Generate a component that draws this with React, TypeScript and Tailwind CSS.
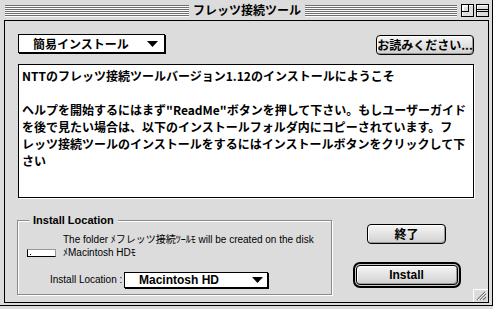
import React from 'react';

const jp = "font-['Noto_Sans_CJK_JP','Noto_Sans_CJK_SC',sans-serif]";
const sans = "font-['Liberation_Sans','Noto_Sans_CJK_JP',sans-serif]";

function Stripes({ className }: { className: string }) {
  return (
    <div className={`flex flex-col gap-px ${className}`}>
      {[0, 1, 2, 3, 4, 5].map((i) => (
        <div key={i} className="h-px bg-[#6f6f6f] shadow-[0_1px_0_#fafafa]" />
      ))}
    </div>
  );
}

const Arrow = () => (
  <svg width="11" height="6" viewBox="0 0 11 6">
    <polygon points="0,0 11,0 5.5,6" fill="#000" />
  </svg>
);

const ZoomBox = () => (
  <svg width="13" height="13" viewBox="0 0 13 13">
    <rect x="0.5" y="0.5" width="12" height="12" fill="#dcdcdc" stroke="#000" />
    <path d="M1.5 11.5V1.5H11.5" stroke="#fff" fill="none" />
    <rect x="0.5" y="0.5" width="7" height="7" fill="none" stroke="#000" />
    <path d="M2.5 6.5V2.5H6.5" stroke="#fff" fill="none" />
  </svg>
);

const CollapseBox = () => (
  <svg width="13" height="13" viewBox="0 0 13 13">
    <rect x="0.5" y="0.5" width="12" height="12" fill="#dcdcdc" stroke="#000" />
    <path d="M1.5 11.5V1.5H11.5" stroke="#fff" fill="none" />
    <path d="M0.5 5.5H12.5M0.5 7.5H12.5" stroke="#000" />
  </svg>
);

const GrowBox = () => (
  <svg width="15" height="13" viewBox="0 0 15 13">
    <rect x="0" y="0" width="15" height="13" fill="#dcdcdc" />
    <path d="M0.5 13V0.5H15" stroke="#fff" fill="none" />
    <path d="M4 11L12 3M7 11L13 5M10 11L13 8" stroke="#777" strokeWidth="1.2" />
    <path d="M5 11L12.5 3.5M8 11L13.5 5.5" stroke="#fff" strokeWidth="0.8" />
  </svg>
);

const body = [
  'NTTのフレッツ接続ツールバージョン1.12のインストールにようこそ',
  '',
  'ヘルプを開始するにはまず"ReadMe"ボタンを押して下さい。もしユーザーガイド',
  'を後で見たい場合は、以下のインストールフォルダ内にコピーされています。フ',
  'レッツ接続ツールのインストールをするにはインストールボタンをクリックして下',
  'さい',
];

export default function App() {
  return (
    <div className="h-[309px] w-[493px] overflow-hidden bg-[#dcdcdc]">
      <div className="flex h-[306px] w-[493px] flex-col border-r border-b border-black pb-[2px] pl-[4px] pr-[3px]">
        {/* Title bar */}
        <div className="flex h-[20px] shrink-0 items-center">
          <Stripes className="ml-px w-[184px]" />
          <div className={`${jp} px-[4px] text-[12px] font-bold leading-[20px] text-black`}>
            フレッツ接続ツール
          </div>
          <Stripes className="flex-1" />
          <div className="ml-[4px] flex gap-[2px]">
            <ZoomBox />
            <CollapseBox />
          </div>
        </div>

        {/* Content */}
        <div className="relative flex h-[283px] w-[485px] flex-col border border-black pl-[13px] pt-[13px]">
          <div className="flex h-[21px] w-[456px] items-start justify-between">
            <div className="flex h-[19px] w-[147px] items-center justify-between border border-black bg-white pl-[14px] pr-[6px] shadow-[1px_1px_0_#000]">
              <span className={`${jp} text-[12px] font-bold leading-none`}>簡易インストール</span>
              <Arrow />
            </div>
            <button className="mt-px flex h-[20px] w-[98px] items-center justify-center rounded-[4px] border border-black bg-[linear-gradient(#f6f6f6,#d0d0d0)] shadow-[inset_1px_1px_0_#fff,inset_-1px_-1px_0_#999]">
              <span className={`${jp} text-[12px] font-bold leading-none`}>お読みください...</span>
            </button>
          </div>

          <div className="mt-[9px] h-[134px] w-[456px] border border-black bg-white pl-[3px] pt-[2px] shadow-[1px_1px_0_#fff]">
            {body.map((line, i) => (
              <div key={i} className={`${jp} h-[17px] whitespace-nowrap text-[12px] font-bold leading-[17px] text-black`}>
                {line}
              </div>
            ))}
          </div>

          <div className="flex items-start">
            <div className="relative -ml-px mt-[22px] h-[75px] w-[315px] border border-[#8a8a8a] shadow-[inset_1px_1px_0_#fff,1px_1px_0_#fff]">
              <span className={`${sans} absolute -top-[8px] left-[11px] bg-[#dcdcdc] px-[4px] text-[11px] font-bold leading-[15px]`}>
                Install Location
              </span>
              <div className="pt-[12px]">
                <div className={`${sans} whitespace-nowrap pl-[45px] text-[10px] leading-[13px]`}>
                  The folder ﾒフレッツ接続ﾂｰﾙﾓ will be created on the disk
                </div>
                <div className="flex items-center">
                  <div className="ml-[9px] flex h-[8px] w-[29px] items-end border border-black border-t-[#999] border-r-[#999] bg-white pl-[2px]">
                    <div className="mb-px h-px w-px bg-black" />
                  </div>
                  <div className={`${sans} ml-[7px] whitespace-nowrap text-[10px] leading-[13px]`}>ﾒMacintosh HDﾓ</div>
                </div>
                <div className="mt-[13px] flex items-center">
                  <span className={`${sans} ml-[32px] w-[74px] whitespace-nowrap text-[10px] leading-none`}>Install Location :</span>
                  <div className="flex h-[16px] w-[144px] items-center justify-between border border-black bg-white pl-[14px] pr-[4px] shadow-[1px_1px_0_#000]">
                    <span className={`${sans} text-[12px] font-bold leading-none`}>Macintosh HD</span>
                    <Arrow />
                  </div>
                </div>
              </div>
            </div>

            <div className="ml-[20px] flex w-[109px] flex-col items-center">
              <button className="mt-[26px] flex h-[20px] w-[79px] items-center justify-center rounded-[4px] border border-black bg-[linear-gradient(#f6f6f6,#d0d0d0)] shadow-[inset_1px_1px_0_#fff,inset_-1px_-1px_0_#999]">
                <span className={`${jp} text-[12px] font-bold leading-none`}>終了</span>
              </button>
              <div className="mt-[18px] rounded-[7px] border-2 border-black bg-[#c8c8c8] p-px">
                <button className="flex h-[20px] w-[102px] items-center justify-center rounded-[4px] border border-black bg-[linear-gradient(#f6f6f6,#d0d0d0)] shadow-[inset_1px_1px_0_#fff,inset_-1px_-1px_0_#999]">
                  <span className={`${sans} text-[12px] font-bold leading-none`}>Install</span>
                </button>
              </div>
            </div>
          </div>

          <div className="absolute bottom-0 right-0">
            <GrowBox />
          </div>
        </div>
      </div>
    </div>
  );
}
